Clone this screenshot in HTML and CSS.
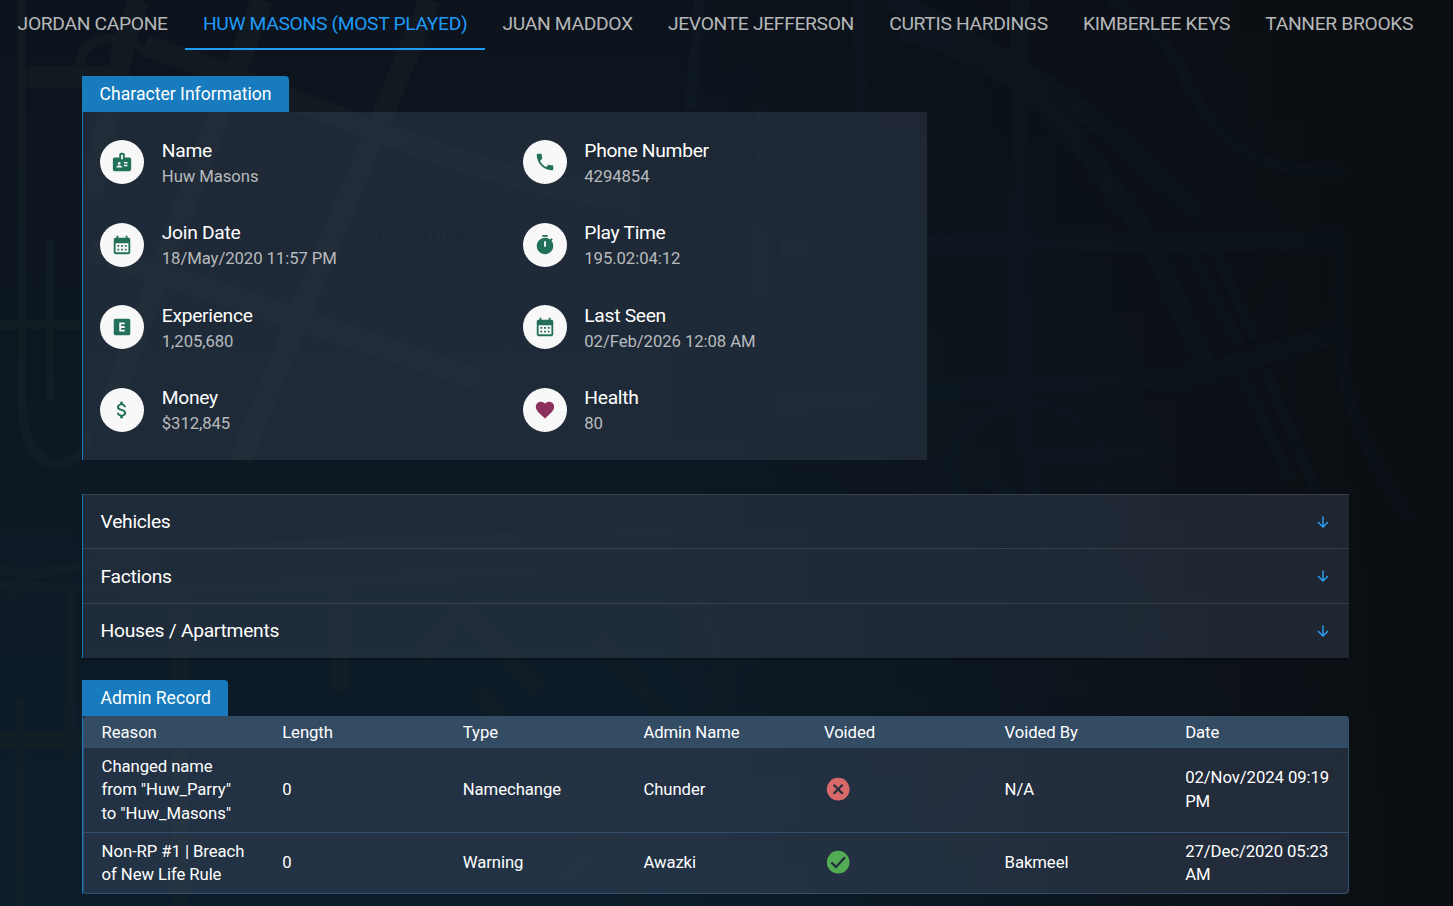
FILE: index.html
```html
<!DOCTYPE html>
<html lang="en">
<head>
<meta charset="utf-8">
<title>Character Profile</title>
<link rel="stylesheet" href="styles.css">
</head>
<body>
<svg class="map" viewBox="0 0 1453 906" preserveAspectRatio="none" aria-hidden="true">
  <defs>
    <linearGradient id="fade" gradientUnits="userSpaceOnUse" x1="0" y1="0" x2="1453" y2="0">
      <stop offset="0" stop-color="#162126"/><stop offset=".28" stop-color="#182026"/><stop offset=".55" stop-color="#0e1b24"/><stop offset="1" stop-color="#0b121b"/>
    </linearGradient>
  </defs>
  <g fill="none" class="roads">
    <path stroke-width="22" d="M28 77H130M140 0C125 30 105 120 92 200M262 0L112 400M430 0L240 460M145 45C330 110 500 190 640 200M90 250L480 380"/>
    <path stroke-width="9" d="M80 65C85 30 120 35 145 50M22 0V400C22 480 80 480 90 430M50 240V400M0 325H80M0 570C60 580 80 560 160 550L700 530M0 585C300 600 380 570 540 572M10 600C20 560 90 570 160 560M20 700V906M70 590V760"/>
    <path stroke-width="20" d="M890 0C1060 80 1110 130 1200 215M900 30C1020 60 1060 110 1145 235M1020 0V400M780 250L930 245L1345 240M780 405L930 392L1200 375L1345 330M1155 250L1205 365"/>
    <path stroke-width="11" d="M1110 0C1160 30 1180 60 1190 90C1230 150 1250 170 1345 172M1340 240V330C1340 400 1370 460 1410 520M1190 250L1240 345M1215 250L1255 340M1240 370L1290 480M1265 370L1320 500M860 0V160M700 0L690 110M760 110V300M980 480C1080 520 1150 590 1160 640"/>
    <ellipse cx="1028" cy="465" rx="77" ry="60" stroke-width="10"/>
    <path stroke-width="16" d="M1020 400L1045 560M1030 455H1170M420 660L460 610L540 690M480 690L640 906M600 640L720 780M180 590V906M0 740H90M340 590V690M560 880C700 760 760 700 700 610"/>
  </g>
  <text class="district" x="378" y="241">DOWNTOWN</text>
</svg>
<nav class="tabs">
  <a class="tab">JORDAN CAPONE</a>
  <a class="tab tab-active">HUW MASONS (MOST PLAYED)</a>
  <a class="tab">JUAN MADDOX</a>
  <a class="tab">JEVONTE JEFFERSON</a>
  <a class="tab">CURTIS HARDINGS</a>
  <a class="tab">KIMBERLEE KEYS</a>
  <a class="tab">TANNER BROOKS</a>
</nav>
<main class="page">
  <section class="info">
    <h2 class="label">Character Information</h2>
    <div class="info-grid">
      <div class="item"><span class="avatar"><svg viewBox="0 0 24 24"><path d="M20 7h-5V4c0-1.1-.9-2-2-2h-2c-1.1 0-2 .9-2 2v3H4c-1.1 0-2 .9-2 2v11c0 1.1.9 2 2 2h16c1.1 0 2-.9 2-2V9c0-1.1-.9-2-2-2zM9 12c.83 0 1.5.67 1.5 1.5S9.83 15 9 15s-1.5-.67-1.5-1.5S8.17 12 9 12zm3 6H6v-.75c0-1 2-1.5 3-1.5s3 .5 3 1.5V18zm1-9h-2V4h2v5zm5 7.5h-4V15h4v1.5zm0-3h-4V12h4v1.5z"/></svg></span><div class="text"><div class="name">Name</div><div class="value">Huw Masons</div></div></div>
      <div class="item"><span class="avatar"><svg viewBox="0 0 24 24"><path d="M6.62 10.79c1.44 2.83 3.76 5.14 6.59 6.59l2.2-2.2c.27-.27.67-.36 1.02-.24 1.12.37 2.33.57 3.57.57.55 0 1 .45 1 1V20c0 .55-.45 1-1 1-9.39 0-17-7.61-17-17 0-.55.45-1 1-1h3.5c.55 0 1 .45 1 1 0 1.25.2 2.45.57 3.57.11.35.03.74-.25 1.02l-2.2 2.2z"/></svg></span><div class="text"><div class="name">Phone Number</div><div class="value">4294854</div></div></div>
      <div class="item"><span class="avatar"><svg viewBox="0 0 24 24"><path d="M19 4h-1V2h-2v2H8V2H6v2H5c-1.11 0-1.99.9-1.99 2L3 20c0 1.1.89 2 2 2h14c1.1 0 2-.9 2-2V6c0-1.1-.9-2-2-2zm0 16H5V10h14v10zM9 14H7v-2h2v2zm4 0h-2v-2h2v2zm4 0h-2v-2h2v2zm-8 4H7v-2h2v2zm4 0h-2v-2h2v2zm4 0h-2v-2h2v2z"/></svg></span><div class="text"><div class="name">Join Date</div><div class="value">18/May/2020 11:57 PM</div></div></div>
      <div class="item"><span class="avatar"><svg viewBox="0 0 24 24"><path d="M9 1h6v2H9zm10.03 6.39 1.42-1.42c-.43-.51-.9-.99-1.41-1.41l-1.42 1.42C16.07 4.74 14.12 4 12 4c-4.97 0-9 4.03-9 9s4.02 9 9 9 9-4.03 9-9c0-2.12-.74-4.07-1.97-5.61zM13 14h-2V8h2v6z"/></svg></span><div class="text"><div class="name">Play Time</div><div class="value">195.02:04:12</div></div></div>
      <div class="item"><span class="avatar"><svg viewBox="0 0 24 24"><path d="M19 3H5c-1.1 0-2 .9-2 2v14c0 1.1.9 2 2 2h14c1.1 0 2-.9 2-2V5c0-1.1-.9-2-2-2zm-4 6h-4v2h4v2h-4v2h4v2H9V7h6v2z"/></svg></span><div class="text"><div class="name">Experience</div><div class="value">1,205,680</div></div></div>
      <div class="item"><span class="avatar"><svg viewBox="0 0 24 24"><path d="M19 4h-1V2h-2v2H8V2H6v2H5c-1.11 0-1.99.9-1.99 2L3 20c0 1.1.89 2 2 2h14c1.1 0 2-.9 2-2V6c0-1.1-.9-2-2-2zm0 16H5V10h14v10zM9 14H7v-2h2v2zm4 0h-2v-2h2v2zm4 0h-2v-2h2v2zm-8 4H7v-2h2v2zm4 0h-2v-2h2v2zm4 0h-2v-2h2v2z"/></svg></span><div class="text"><div class="name">Last Seen</div><div class="value">02/Feb/2026 12:08 AM</div></div></div>
      <div class="item"><span class="avatar"><svg viewBox="0 0 24 24"><path d="M11.8 10.9c-2.27-.59-3-1.2-3-2.15 0-1.09 1.01-1.85 2.7-1.85 1.78 0 2.44.85 2.5 2.1h2.21c-.07-1.72-1.12-3.3-3.21-3.81V3h-3v2.16c-1.94.42-3.5 1.68-3.5 3.61 0 2.31 1.91 3.46 4.7 4.13 2.5.6 3 1.48 3 2.41 0 .69-.49 1.79-2.7 1.79-2.06 0-2.87-.92-2.98-2.1h-2.2c.12 2.19 1.76 3.42 3.68 3.83V21h3v-2.15c1.95-.37 3.5-1.5 3.5-3.55 0-2.84-2.43-3.81-4.7-4.4z"/></svg></span><div class="text"><div class="name">Money</div><div class="value">$312,845</div></div></div>
      <div class="item"><span class="avatar avatar-health"><svg viewBox="0 0 24 24"><path d="m12 21.35-1.45-1.32C5.4 15.36 2 12.28 2 8.5 2 5.42 4.42 3 7.5 3c1.74 0 3.41.81 4.5 2.09C13.09 3.81 14.76 3 16.5 3 19.58 3 22 5.42 22 8.5c0 3.78-3.4 6.86-8.55 11.54L12 21.35z"/></svg></span><div class="text"><div class="name">Health</div><div class="value">80</div></div></div>
    </div>
  </section>
  <section class="accordion">
    <div class="fold"><span>Vehicles</span><svg class="arrow" viewBox="0 0 12 12"><path d="M6 .5V11M1 6l5 5 5-5"/></svg></div>
    <div class="fold"><span>Factions</span><svg class="arrow" viewBox="0 0 12 12"><path d="M6 .5V11M1 6l5 5 5-5"/></svg></div>
    <div class="fold"><span>Houses / Apartments</span><svg class="arrow" viewBox="0 0 12 12"><path d="M6 .5V11M1 6l5 5 5-5"/></svg></div>
  </section>
  <section class="admin">
    <h2 class="label label-admin">Admin Record</h2>
    <div class="record">
      <div class="row head"><div>Reason</div><div>Length</div><div>Type</div><div>Admin Name</div><div>Voided</div><div>Voided By</div><div>Date</div></div>
      <div class="row first"><div>Changed name from "Huw_Parry" to "Huw_Masons"</div><div>0</div><div>Namechange</div><div>Chunder</div><div><svg class="status" viewBox="0 0 24 24"><circle cx="12" cy="12" r="10.3" fill="#d96a6a"/><path d="M7.9 7.9l8.2 8.2M16.1 7.9l-8.2 8.2"/></svg></div><div>N/A</div><div>02/Nov/2024 09:19 PM</div></div>
      <div class="row second"><div>Non-RP #1 | Breach of New Life Rule</div><div>0</div><div>Warning</div><div>Awazki</div><div><svg class="status" viewBox="0 0 24 24"><circle cx="12" cy="12" r="10.3" fill="#52ab55"/><path d="M5.8 12.2l4.2 4.2 8.2-8.8"/></svg></div><div>Bakmeel</div><div>27/Dec/2020 05:23 AM</div></div>
    </div>
  </section>
</main>
</body>
</html>
```
FILE: styles.css
```css
* { box-sizing: border-box; }
body {
  margin: 0;
  height: 906px;
  overflow: hidden;
  font-family: Roboto, "Liberation Sans", sans-serif;
  font-size: 16.7px;
  letter-spacing: -0.07px;
  color: #fff;
  background: linear-gradient(90deg, transparent 45%, #0b0e12 100%), linear-gradient(180deg, #0c131c, #0d1924 60%, #0c1e2b);
}
.map { position: absolute; inset: 0; width: 100%; height: 100%; z-index: -1; }
.roads { stroke: url(#fade); opacity: .5; }
.district { font-size: 16px; font-weight: 700; letter-spacing: 1px; fill: #0a1018; }
.tabs { display: flex; height: 50px; }
.tab {
  padding: 0 17.6px;
  font-size: 19.25px;
  letter-spacing: -0.33px;
  line-height: 47px;
  color: #b5b7b9;
  white-space: nowrap;
  border-bottom: 2px solid transparent;
}
.tab-active { color: #1d9bf7; border-color: #1d9bf7; }
.page { padding: 26px 104px 0 82px; }
.label {
  margin: 0;
  width: 207px;
  height: 36px;
  padding-left: 17.6px;
  font-size: 17.6px;
  font-weight: 400;
  letter-spacing: 0;
  line-height: 36px;
  background: #177bbd;
  border-radius: 0 4px 0 0;
}
.info-grid {
  display: grid;
  grid-template-columns: 422.5px 1fr;
  grid-auto-rows: 82.5px;
  width: 845px;
  height: 348px;
  padding: 9px 0 0 17px;
  border-left: 1px solid #177bbd;
  background: rgba(58, 70, 88, .42);
}
.item { display: flex; align-items: center; gap: 17.8px; }
.text { padding-top: .8px; }
.avatar {
  display: flex;
  align-items: center;
  justify-content: center;
  width: 44px;
  height: 44px;
  border-radius: 50%;
  background: #f8f8f8;
}
.avatar svg { width: 22px; height: 22px; fill: #23705a; }
.avatar-health svg { fill: #8c2f5c; }
.name { font-size: 19.25px; letter-spacing: -0.3px; line-height: 28px; }
.value { line-height: 24px; color: #b8bbbe; }
.accordion { margin-top: 34px; border-left: 1px solid #177bbd; box-shadow: 0 1px 2px rgba(0, 0, 0, .6); }
.fold {
  display: flex;
  align-items: center;
  justify-content: space-between;
  height: 54.45px;
  padding: 0 20px 0 17.6px;
  font-size: 19.25px;
  letter-spacing: -0.29px;
  background: rgba(58, 70, 88, .42);
  border-top: 1px solid rgba(255, 255, 255, .12);
}
.fold:last-child { height: 55px; padding-bottom: .5px; }
.arrow { width: 12px; height: 12px; fill: none; stroke: #2f9bec; stroke-width: 1.5; }
.admin { margin-top: 22.1px; }
.label-admin { width: 146px; padding-left: 18.6px; }
.record { border-left: 1px solid #177bbd; }
.row {
  display: grid;
  grid-template-columns: repeat(7, 180.6px);
  align-items: center;
  line-height: 23.5px;
  background: rgba(64, 78, 104, .43);
  border: 1px solid #35506e;
  border-top: 0;
}
.row > div { padding: 0 17.6px; }
.head { height: 32px; padding-top: 2px; background: #344b64; border-radius: 4px 4px 0 0; }
.first { height: 85px; }
.second { height: 61px; padding-top: .3px; border-radius: 0 0 4px 4px; }
.status { display: block; width: 26.4px; height: 26.4px; margin: -1px 0 0 .6px; fill: none; }
.status path { stroke: #232d3d; stroke-width: 2; }
```
